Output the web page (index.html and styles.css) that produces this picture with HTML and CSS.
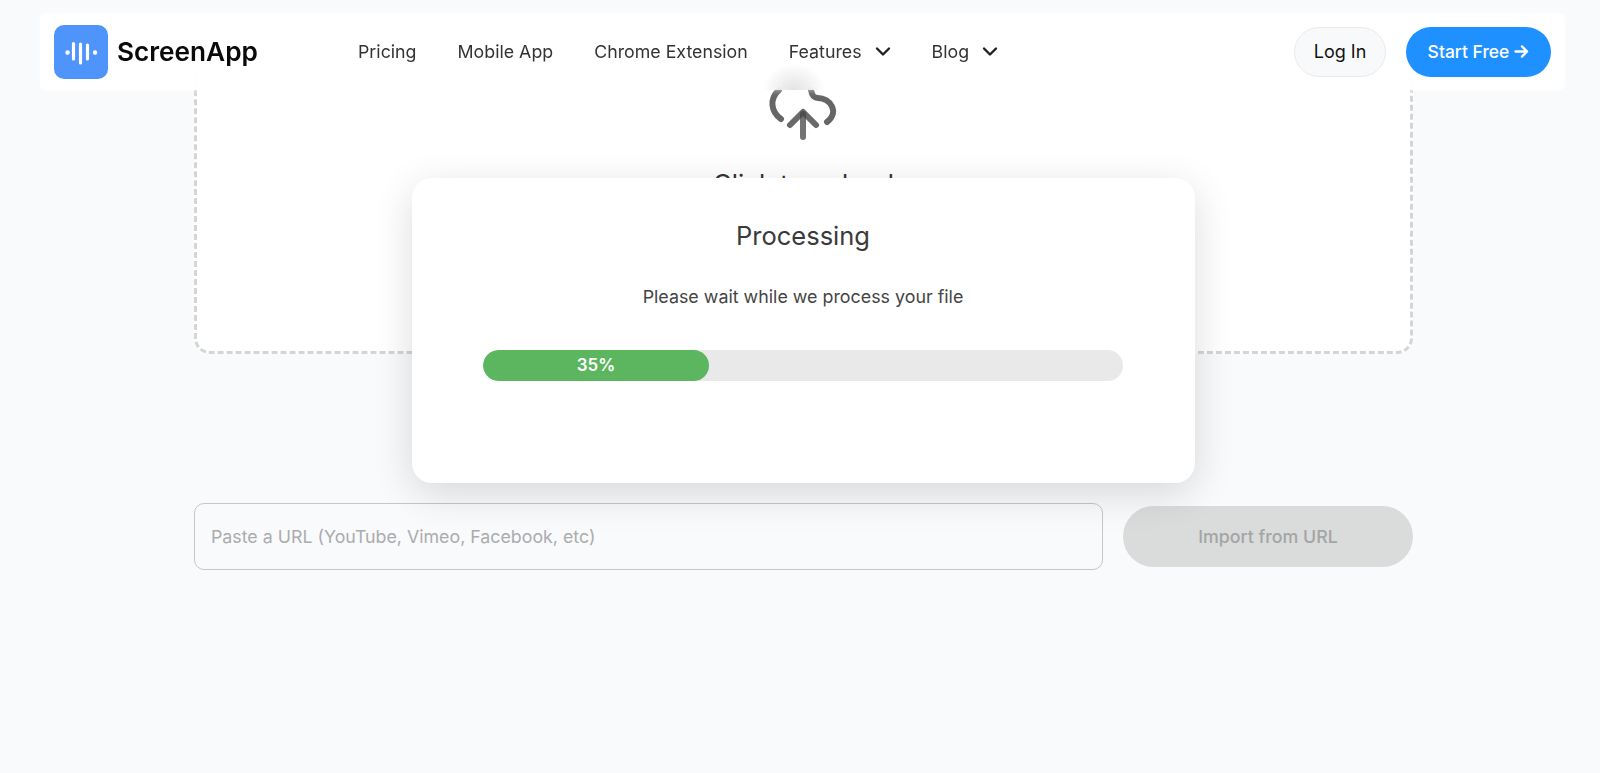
FILE: index.html
```html
<!DOCTYPE html>
<html lang="en">
<head>
<meta charset="UTF-8" />
<meta name="viewport" content="width=device-width, initial-scale=1.0"/>
<title>ScreenApp</title>
<link rel="stylesheet" href="styles.css">
</head>
<body>
<header class="nav">
  <a class="brand" href="#">
    <svg class="brand-logo" viewBox="0 0 54 54" width="54" height="54">
      <rect width="54" height="54" rx="10" fill="#4f94fb"/>
      <g stroke="#fff" stroke-linecap="round" fill="none">
        <path stroke-width="4.4" d="M13.5 27.500h.1M41 27.500h.1"/>
        <path stroke-width="3.2" d="M19.500 18.500v15.500M26.500 19v19M33.500 20v14"/>
      </g>
    </svg>
    <span class="brand-name">ScreenApp</span>
  </a>
  <nav class="nav-links">
    <a href="#">Pricing</a>
    <a href="#">Mobile App</a>
    <a href="#">Chrome Extension</a>
    <a href="#" class="has-menu">Features
      <svg viewBox="0 0 16 12" width="16" height="12"><path d="M2 2.500L8 8.500l6-6" fill="none" stroke="#222" stroke-width="2.400" stroke-linecap="round" stroke-linejoin="round"/></svg>
    </a>
    <a href="#" class="has-menu">Blog
      <svg viewBox="0 0 16 12" width="16" height="12"><path d="M2 2.500L8 8.500l6-6" fill="none" stroke="#222" stroke-width="2.400" stroke-linecap="round" stroke-linejoin="round"/></svg>
    </a>
  </nav>
  <div class="nav-actions">
    <button class="btn-login">Log In</button>
    <button class="btn-start">Start Free
      <svg viewBox="0 0 16 14" width="15" height="13"><path d="M1.500 7h12.500M8.500 1.500L14 7l-5.500 5.500" fill="none" stroke="#fff" stroke-width="2.500" stroke-linecap="round" stroke-linejoin="round"/></svg>
    </button>
  </div>
  <div class="nav-smudge"></div>
</header>

<main class="page">
  <section class="dropzone">
    <svg class="cloud" viewBox="768 62 72 80" width="72" height="80">
      <path d="M781 119C771 112 769 99 779 90M811 90C812 96 814 98 818 98C830 98 840 112 827 122" fill="none" stroke="#666" stroke-width="6" stroke-linecap="round"/>
      <path d="M803 114V137" fill="none" stroke="#444" stroke-opacity=".75" stroke-width="6" stroke-linecap="round"/>
      <path d="M790 125L803 112L816 125" fill="none" stroke="#444" stroke-opacity=".8" stroke-width="6" stroke-linecap="round" stroke-linejoin="round"/>
    </svg>
    <p class="drop-title">Click to upload</p>
  </section>

  <div class="url-row">
    <input class="url-input" type="text" placeholder="Paste a URL (YouTube, Vimeo, Facebook, etc)" />
    <button class="url-btn" disabled>Import from URL</button>
  </div>

  <div class="modal">
    <h2 class="modal-title">Processing</h2>
    <p class="modal-text">Please wait while we process your file</p>
    <div class="progress-bar">
      <div class="progress" style="width: 35.300%;">35%</div>
    </div>
  </div>
</main>
</body>
</html>
```

FILE: styles.css
```css
body {
  margin: 0;
  background-color: #f9fafc;
  color: #333;
  font-family: 'Inter', 'Liberation Sans', sans-serif;
  height: 773px;
  overflow: hidden;
}

a {
  color: inherit;
  text-decoration: none;
}

button {
  font-family: inherit;
}

.nav {
  position: fixed;
  top: 13px;
  left: 40px;
  right: 35px;
  height: 77px;
  display: flex;
  align-items: center;
  padding: 0 14px;
  box-sizing: border-box;
  background-color: rgba(255, 255, 255, 0.9);
  backdrop-filter: blur(16px);
  box-shadow: 0 0 6px rgba(255, 255, 255, 0.6);
  border-radius: 6px;
  z-index: 10;
}

/* the cloud icon showing through the blurred bar */
.nav-smudge {
  position: absolute;
  left: 722px;
  bottom: 0;
  width: 64px;
  height: 27px;
  background: radial-gradient(ellipse 50% 100% at 50% 100%, rgba(0, 0, 0, 0.11), rgba(0, 0, 0, 0));
}

.brand {
  display: flex;
  align-items: center;
  gap: 9px;
  width: 304px;
}

.brand-name {
  font-size: 26.2px;
  font-weight: 600;
  color: #0a0a0a;
}

.nav-links {
  display: flex;
  align-items: center;
  gap: 41px;
  font-size: 17.8px;
  color: #333;
}

.has-menu {
  display: flex;
  align-items: center;
  gap: 13px;
}

.nav-actions {
  margin-left: auto;
  display: flex;
  align-items: center;
  gap: 20px;
}

.btn-login {
  width: 92px;
  height: 50px;
  border-radius: 25px;
  border: 1px solid #e9eaec;
  background-color: #f8f9fb;
  color: #111;
  font-size: 18px;
}

.btn-start {
  width: 145px;
  height: 50px;
  border-radius: 25px;
  border: none;
  background-color: #1e90ff;
  color: #fff;
  font-size: 17.5px;
  font-weight: 500;
  display: flex;
  align-items: center;
  justify-content: center;
  gap: 5px;
}

.page {
  position: relative;
  width: 1219px;
  margin-left: 194px;
  padding-top: 40px;
}

.dropzone {
  height: 314px;
  box-sizing: border-box;
  border: 3px dashed #d3d5d7;
  border-radius: 16px;
  background-color: #fff;
  display: flex;
  flex-direction: column;
  align-items: center;
  padding-top: 19px;
}

.cloud {
  display: block;
}

.drop-title {
  margin: 26px 0 0;
  font-size: 25.7px;
  font-weight: 400;
}

.url-row {
  margin-top: 149px;
  display: flex;
  align-items: center;
  gap: 20px;
}

.url-input {
  flex: 1;
  height: 67px;
  box-sizing: border-box;
  padding: 0 16px;
  border: 1px solid #c4c6c9;
  border-radius: 10px;
  background: transparent;
  font-family: inherit;
  font-size: 17.8px;
  outline: none;
}

.url-input::placeholder {
  color: #aaacae;
}

.url-btn {
  width: 290px;
  height: 61px;
  border: none;
  border-radius: 31px;
  background-color: #dadbdb;
  color: #a3a5a6;
  font-size: 17.8px;
  font-weight: 500;
}

.modal {
  position: absolute;
  top: 178px;
  left: 218px;
  width: 783px;
  height: 305px;
  box-sizing: border-box;
  padding: 42px 72px 0 71px;
  background-color: #fff;
  border-radius: 20px;
  box-shadow: 0 10px 40px rgba(0, 0, 0, 0.14);
  text-align: center;
}

.modal-title {
  margin: 0;
  font-size: 25.5px;
  font-weight: 400;
  line-height: 32px;
  color: #3a3a3a;
}

.modal-text {
  margin: 31px 0 0;
  font-size: 17.85px;
  line-height: 28px;
  color: #444;
}

.progress-bar {
  margin-top: 39px;
  height: 31px;
  background-color: #e9e9e9;
  border-radius: 16px;
  overflow: hidden;
}

.progress {
  height: 100%;
  background-color: #5cb660;
  border-radius: 16px;
  color: #fff;
  font-size: 17px;
  font-weight: 600;
  line-height: 30px;
}
```
